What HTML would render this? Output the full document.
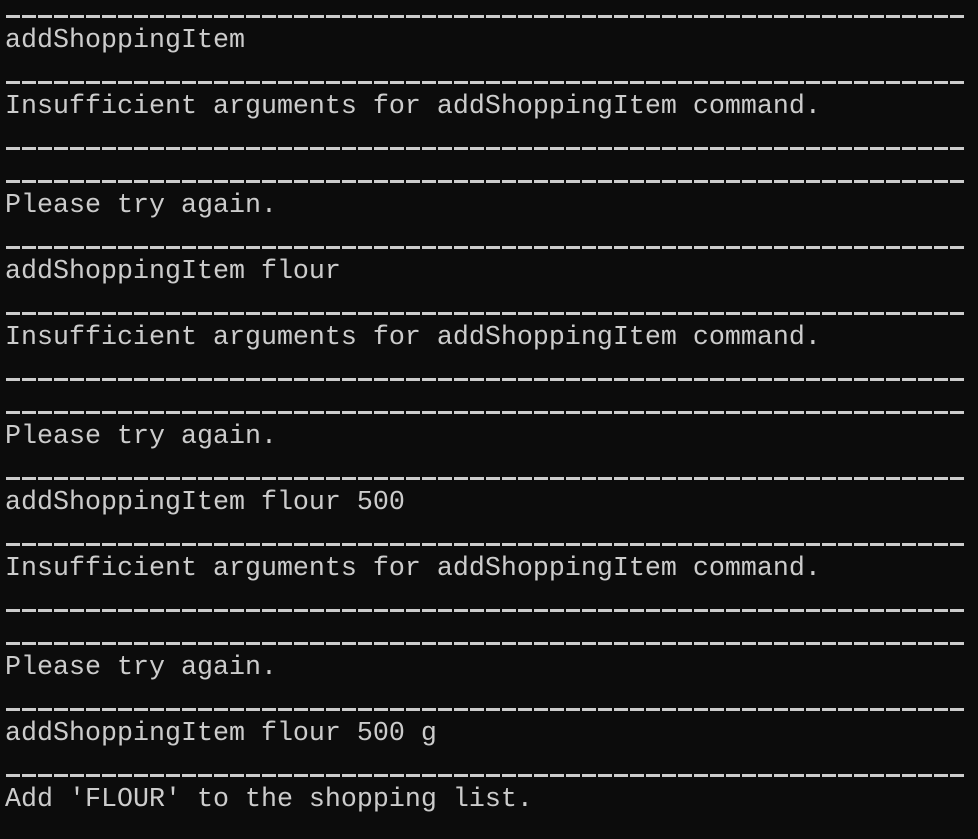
<!DOCTYPE html>
<html><head><style>
html,body{margin:0;padding:0;background:#0c0c0c;width:978px;height:839px;overflow:hidden;position:relative}
pre{margin:0;position:absolute;left:5px;top:-8px;font-family:"Liberation Mono",monospace;font-size:26.67px;line-height:33px;color:#cccccc;white-space:pre}
.d{position:absolute;left:6px;width:960px;height:3px;background:repeating-linear-gradient(90deg,#cccccc 0 14px,transparent 14px 16px)}
</style></head><body><pre>

addShoppingItem

Insufficient arguments for addShoppingItem command.


Please try again.

addShoppingItem flour

Insufficient arguments for addShoppingItem command.


Please try again.

addShoppingItem flour 500

Insufficient arguments for addShoppingItem command.


Please try again.

addShoppingItem flour 500 g

Add 'FLOUR' to the shopping list.</pre>
<div class="d" style="top:15px"></div>
<div class="d" style="top:81px"></div>
<div class="d" style="top:147px"></div>
<div class="d" style="top:180px"></div>
<div class="d" style="top:246px"></div>
<div class="d" style="top:312px"></div>
<div class="d" style="top:378px"></div>
<div class="d" style="top:411px"></div>
<div class="d" style="top:477px"></div>
<div class="d" style="top:543px"></div>
<div class="d" style="top:609px"></div>
<div class="d" style="top:642px"></div>
<div class="d" style="top:708px"></div>
<div class="d" style="top:774px"></div>
</body></html>
